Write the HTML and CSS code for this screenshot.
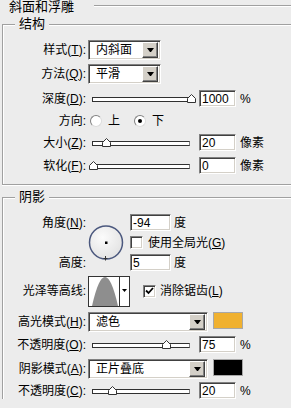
FILE: index.html
```html
<!DOCTYPE html>
<html lang="zh">
<head>
    <meta charset="UTF-8">
    <title>斜面和浮雕</title>
    <link rel="stylesheet" href="styles.css">
</head>
<body>
    <div class="panel-title"><span>斜面和浮雕</span></div>

    <fieldset class="box box-struct">
        <legend>结构</legend>

        <div class="row row-select first">
            <span class="lbl">样式(<u>T</u>):</span>
            <div class="select select-short"><span class="text">内斜面</span><span class="drop"></span></div>
        </div>
        <div class="row row-select gap4">
            <span class="lbl">方法(<u>Q</u>):</span>
            <div class="select select-short"><span class="text">平滑</span><span class="drop"></span></div>
        </div>
        <div class="row gap6">
            <span class="lbl">深度(<u>D</u>):</span>
            <div class="slider"><div class="track"></div><svg class="thumb" style="left:99px" width="9" height="9" viewBox="0 0 9 9"><path d="M0.5 8.5V4.5L4.5 0.5L8.5 4.5V8.5Z" fill="#fff" stroke="#333"/></svg></div>
            <input class="num" type="text" value="1000">
            <span class="unit">%</span>
        </div>
        <div class="row gap5">
            <span class="lbl">方向:</span>
            <span class="radio-item"><span class="radio"></span>上</span>
            <span class="radio-item"><span class="radio on"></span>下</span>
        </div>
        <div class="row gap5">
            <span class="lbl">大小(<u>Z</u>):</span>
            <div class="slider"><div class="track"></div><svg class="thumb" style="left:14px" width="9" height="9" viewBox="0 0 9 9"><path d="M0.5 8.5V4.5L4.5 0.5L8.5 4.5V8.5Z" fill="#fff" stroke="#333"/></svg></div>
            <input class="num" type="text" value="20">
            <span class="unit">像素</span>
        </div>
        <div class="row gap6">
            <span class="lbl">软化(<u>F</u>):</span>
            <div class="slider"><div class="track"></div><svg class="thumb" style="left:1px" width="9" height="9" viewBox="0 0 9 9"><path d="M0.5 8.5V4.5L4.5 0.5L8.5 4.5V8.5Z" fill="#fff" stroke="#333"/></svg></div>
            <input class="num" type="text" value="0">
            <span class="unit">像素</span>
        </div>
    </fieldset>

    <fieldset class="box box-shade">
        <legend>阴影</legend>

        <div class="angle">
            <span class="lbl lbl-angle">角度(<u>N</u>):</span>
            <svg class="dial" width="36" height="36" viewBox="0 0 36 36">
                <defs>
                    <radialGradient id="dialFill" cx="40%" cy="35%" r="70%">
                        <stop offset="0" stop-color="#fbfbfb"/>
                        <stop offset="1" stop-color="#e2e2e2"/>
                    </radialGradient>
                </defs>
                <circle cx="18" cy="17.5" r="16.5" fill="url(#dialFill)" stroke="#4b587e" stroke-width="1.5"/>
                <rect x="17" y="16.5" width="2.5" height="2.5" fill="#000"/>
                <path d="M17.5 31V35.5M15.5 33.5H19.5" stroke="#333" stroke-width="1"/>
            </svg>
            <div class="field field-angle">
                <input class="num num-wide" type="text" value="-94">
                <span class="unit unit-deg">度</span>
            </div>
            <div class="field field-global">
                <span class="check"></span>
                <span class="check-text">使用全局光(<u>G</u>)</span>
            </div>
            <span class="lbl lbl-height">高度:</span>
            <div class="field field-height">
                <input class="num num-wide" type="text" value="5">
                <span class="unit unit-deg">度</span>
            </div>
        </div>

        <div class="row row-gloss">
            <span class="lbl">光泽等高线:</span>
            <svg class="contour" width="42" height="31" viewBox="0 0 42 31">
                <rect x="0.5" y="0.5" width="41" height="30" fill="#fff" stroke="#333"/>
                <path d="M4 30Q17 -28 30 30Z" fill="#8e8e8e"/>
                <line x1="31.5" y1="1" x2="31.5" y2="30" stroke="#333"/>
                <path d="M34 13H39L36.5 16Z" fill="#000"/>
            </svg>
            <span class="check check-gloss"><svg width="9" height="8" viewBox="0 0 9 8"><path d="M1 3.5L3.5 6L8 1" stroke="#000" stroke-width="1.8" fill="none"/></svg></span>
            <span class="check-text">消除锯齿(<u>L</u>)</span>
        </div>

        <div class="row row-select gap6">
            <span class="lbl">高光模式(<u>H</u>):</span>
            <div class="select select-long"><span class="text">滤色</span><span class="drop"></span></div>
            <span class="swatch swatch-orange"></span>
        </div>
        <div class="row gap4">
            <span class="lbl">不透明度(<u>O</u>):</span>
            <div class="slider"><div class="track"></div><svg class="thumb" style="left:74px" width="9" height="9" viewBox="0 0 9 9"><path d="M0.5 8.5V4.5L4.5 0.5L8.5 4.5V8.5Z" fill="#fff" stroke="#333"/></svg></div>
            <input class="num" type="text" value="75">
            <span class="unit">%</span>
        </div>
        <div class="row row-select gap6">
            <span class="lbl">阴影模式(<u>A</u>):</span>
            <div class="select select-long"><span class="text">正片叠底</span><span class="drop"></span></div>
            <span class="swatch swatch-black"></span>
        </div>
        <div class="row gap3">
            <span class="lbl">不透明度(<u>C</u>):</span>
            <div class="slider"><div class="track"></div><svg class="thumb" style="left:20px" width="9" height="9" viewBox="0 0 9 9"><path d="M0.5 8.5V4.5L4.5 0.5L8.5 4.5V8.5Z" fill="#fff" stroke="#333"/></svg></div>
            <input class="num" type="text" value="20">
            <span class="unit">%</span>
        </div>
    </fieldset>
</body>
</html>
```

FILE: styles.css
```css
* {
    box-sizing: border-box;
}

html, body {
    margin: 0;
}

body {
    width: 291px;
    height: 408px;
    overflow: hidden;
    background-color: #ececec;
    color: #000;
    font-family: "Liberation Sans", "Noto Sans CJK SC", sans-serif;
    font-size: 12px;
    line-height: 12px;
}

u {
    text-decoration-thickness: 1px;
    text-underline-offset: 1px;
}

/* group headings */
.panel-title {
    display: flex;
    align-items: center;
    height: 13px;
    padding-left: 9px;
    font-size: 13px;
    line-height: 13px;
}

.panel-title span {
    padding-right: 20px;
}

.panel-title::after {
    content: "";
    flex: 1;
    margin-top: -1px;
    border-top: 1px solid #a0a0a0;
    border-bottom: 1px solid #fff;
}

.box {
    margin: 5px 0 0 2px;
    padding: 0 0 10px;
    min-width: 0;
    border: 1px solid #a0a0a0;
    border-right: none;
    box-shadow: inset 1px 1px 0 #fff, 0 1px 0 #fff;
}

.box legend {
    margin-left: 12px;
    padding: 0 4px;
    font-size: 13px;
    line-height: 12px;
    background-color: #ececec;
}

.box-shade {
    margin-top: 6px;
    padding-bottom: 0;
    border-bottom: none;
    box-shadow: inset 1px 1px 0 #fff;
}

/* rows */
.row {
    display: flex;
    align-items: center;
    height: 17px;
}

.row-select {
    height: 20px;
}

.first { margin-top: 10px; }
.gap3 { margin-top: 3px; }
.gap4 { margin-top: 4px; }
.gap5 { margin-top: 5px; }
.gap6 { margin-top: 6px; }

.lbl {
    flex: none;
    width: 83px;
    margin-right: 2px;
    text-align: right;
    white-space: nowrap;
}

/* dropdowns */
.select {
    display: flex;
    align-items: center;
    height: 20px;
    padding: 1px 1px 1px 7px;
    background: #fff;
    border: 1px solid;
    border-color: #808080 #fff #fff #808080;
    box-shadow: inset 1px 1px 0 #404040, inset -1px -1px 0 #d4d0c8;
}

.select-short {
    width: 73px;
}

.select-long {
    width: 120px;
}

.select .text {
    flex: 1;
}

.drop {
    display: flex;
    align-items: center;
    justify-content: center;
    width: 16px;
    height: 16px;
    margin-right: 1px;
    background: #d4d0c8;
    border: 1px solid;
    border-color: #fff #404040 #404040 #fff;
    box-shadow: inset -1px -1px 0 #808080;
}

.drop::after {
    content: "";
    width: 1px;
    border-left: 3px solid transparent;
    border-right: 3px solid transparent;
    border-top: 4px solid #000;
}

.swatch {
    align-self: flex-start;
    width: 30px;
    height: 17px;
    margin-left: 5px;
    border: 1px solid #a8a8a8;
}

.swatch-orange {
    background: #f0b130;
}

.swatch-black {
    background: #000;
}

/* sliders */
.slider {
    position: relative;
    flex: none;
    width: 111px;
    height: 17px;
}

.track {
    margin: 7px 0 0 4px;
    width: 98px;
    height: 5px;
    background: #fff;
    border: 1px solid #303030;
    border-right-color: #808080;
}

.thumb {
    position: absolute;
    top: 4px;
}

/* text fields */
.num {
    flex: none;
    width: 37px;
    height: 17px;
    margin: 0;
    padding: 0 0 0 2px;
    font: inherit;
    line-height: 15px;
    color: #000;
    background: #fff;
    border: 1px solid;
    border-color: #808080 #fff #fff #808080;
    box-shadow: inset 1px 1px 0 #404040, inset -1px -1px 0 #d4d0c8;
    outline: none;
}

.num-wide {
    width: 41px;
}

.unit {
    margin-left: 4px;
}

.unit-deg {
    margin-left: 3px;
}

/* radios and checkboxes */
.radio-item {
    display: flex;
    align-items: center;
    gap: 6px;
    margin-left: 2px;
    margin-right: 12px;
}

.radio {
    display: flex;
    align-items: center;
    justify-content: center;
    width: 12px;
    height: 12px;
    background: #fff;
    border: 1px solid;
    border-color: #808080 #dcdcdc #dcdcdc #808080;
    border-radius: 50%;
}

.radio.on::after {
    content: "";
    width: 4px;
    height: 4px;
    background: #000;
    border-radius: 50%;
}

.check {
    display: inline-flex;
    align-items: center;
    justify-content: center;
    flex: none;
    width: 13px;
    height: 13px;
    background: #fff;
    border: 1px solid;
    border-color: #808080 #fff #fff #808080;
    box-shadow: inset 1px 1px 0 #404040, inset -1px -1px 0 #d4d0c8;
}

.check-text {
    margin-left: 5px;
    white-space: nowrap;
}

/* angle block */
.angle {
    display: grid;
    grid-template-columns: 85px 42px 1fr;
    grid-template-rows: 17px 23px 17px;
    margin-top: 11px;
}

.lbl-angle {
    grid-column: 1;
    grid-row: 1;
    align-self: center;
}

.lbl-height {
    grid-column: 1;
    grid-row: 3;
    align-self: center;
}

.dial {
    grid-column: 2;
    grid-row: 1 / 4;
    align-self: center;
}

.field {
    display: flex;
    align-items: center;
    grid-column: 3;
}

.field-angle { grid-row: 1; }
.field-global { grid-row: 2; }
.field-height { grid-row: 3; }

/* gloss contour */
.row-gloss {
    height: 30px;
    margin-top: 5px;
}

.contour {
    flex: none;
}

.check-gloss {
    margin-left: 13px;
}

.row-gloss .check-text {
    margin-left: 4px;
}
```
